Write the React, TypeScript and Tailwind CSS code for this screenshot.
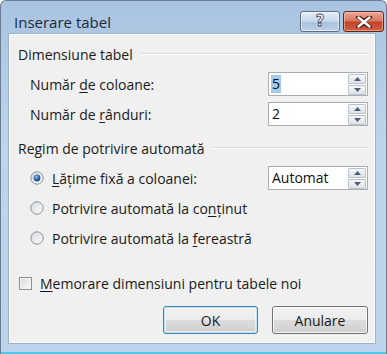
import React from "react";

function Spin({ value, selected }: { value: string; selected?: boolean }) {
  return (
    <div className="w-[100px] h-[24px] border border-[#abadb3] bg-white flex items-center justify-between pl-[2px] pr-[1px]">
      <span className={selected ? "bg-[#a3c9ef] text-[#111] px-[1px] leading-[18px]" : "text-[#111] px-[1px] leading-[18px]"}>{value}</span>
      <div className="flex flex-col gap-[1px] w-[18px]">
        <div className="h-[10px] border border-[#bcc3cc] rounded-[1px] bg-[linear-gradient(#f6f6f6,#dfe2e6)] flex items-center justify-center">
          <svg width="7" height="4" viewBox="0 0 7 4"><path d="M0 4 L3.5 0 L7 4 Z" fill="#4a5e80" /></svg>
        </div>
        <div className="h-[10px] border border-[#bcc3cc] rounded-[1px] bg-[linear-gradient(#f6f6f6,#dfe2e6)] flex items-center justify-center">
          <svg width="7" height="4" viewBox="0 0 7 4"><path d="M0 0 L3.5 4 L7 0 Z" fill="#4a5e80" /></svg>
        </div>
      </div>
    </div>
  );
}

function Radio({ checked }: { checked?: boolean }) {
  return (
    <svg width="14" height="14" viewBox="0 0 14 14" className="shrink-0">
      <defs>
        <linearGradient id="rg" x1="0" y1="0" x2="1" y2="1">
          <stop offset="0" stopColor="#d8dadd" />
          <stop offset="1" stopColor="#fbfbfb" />
        </linearGradient>
        <radialGradient id="rd" cx="0.4" cy="0.35" r="0.7">
          <stop offset="0" stopColor="#8fc0ee" />
          <stop offset="0.55" stopColor="#2f6cb5" />
          <stop offset="1" stopColor="#173f77" />
        </radialGradient>
      </defs>
      <circle cx="7" cy="7" r="6.2" fill="url(#rg)" stroke="#8c9096" strokeWidth="1" />
      {checked && <circle cx="7" cy="7" r="3.4" fill="url(#rd)" />}
    </svg>
  );
}

function Header({ text, lineStart }: { text: string; lineStart?: string }) {
  return (
    <div className="h-[20px] flex items-center pl-[8px] pr-[6px]">
      <span className="text-[#1a1a1a]">{text}</span>
      <div className="flex-1 ml-[8px] h-[2px] border-t border-[#d5dde5] border-b border-b-white" />
    </div>
  );
}

export default function App() {
  return (
    <div className="w-[387px] h-[354px] flex flex-col rounded-t-[6px] border border-[#6a7c91] border-b-0 bg-[linear-gradient(#a9c4e1,#bdd4eb_40%,#bcd3eb)] font-['Open_Sans','Noto_Sans',sans-serif] text-[14px] text-[#1a1a1a] overflow-hidden">
      <div className="h-[33px] shrink-0 flex items-start pl-[13px] pr-[2px]">
        <span className="mt-[10px] text-[15px] leading-[22px] text-[#1b2a3c]">Inserare tabel</span>
        <div className="flex-1" />
        <div className="mt-[10px] w-[40px] h-[21px] rounded-[3px] border border-[#5c6e86] bg-[linear-gradient(#e4edf7,#c6d7ea_50%,#a9c1dd_51%,#bcd0e8)] shadow-[inset_0_0_0_1px_rgba(255,255,255,0.6)] flex items-center justify-center">
          <span className="font-['DejaVu_Sans',sans-serif] font-bold text-[15px] leading-none text-[#f4f7fb] [-webkit-text-stroke:0.8px_#3a4d66]">?</span>
        </div>
        <div className="mt-[10px] ml-[3px] w-[41px] h-[21px] rounded-[3px] border border-[#5a2a22] bg-[linear-gradient(#eba897,#d9775f_45%,#c2432a_55%,#d2603f)] shadow-[inset_0_0_0_1px_rgba(255,210,200,0.5)] flex items-center justify-center">
          <svg width="16" height="12" viewBox="0 0 16 12">
            <path d="M2 1 L8 5 L14 1 M2 11 L8 7 L14 11 M8 5 L8 7" stroke="#4a1c14" strokeWidth="4.2" strokeLinecap="round" fill="none" />
            <path d="M2.5 1.5 L13.5 10.5 M13.5 1.5 L2.5 10.5" stroke="#ffffff" strokeWidth="2.4" strokeLinecap="round" fill="none" />
          </svg>
        </div>
      </div>
      <div className="flex-1 flex flex-col ml-[8px] mr-[11px] mb-[9px] bg-[#f0f0f0] border border-[#f8fbfe] shadow-[0_0_0_1px_#9db4cf]">
        <div className="mt-[9px]">
          <Header text="Dimensiune tabel" />
        </div>
        <div className="mt-[8px] flex items-center justify-between pl-[20px] pr-[6px]">
          <span>Număr <u className="underline-offset-2">d</u>e coloane:</span>
          <Spin value="5" selected />
        </div>
        <div className="mt-[6px] flex items-center justify-between pl-[20px] pr-[6px]">
          <span>Număr de <u className="underline-offset-2">r</u>ânduri:</span>
          <Spin value="2" />
        </div>
        <div className="mt-[12px]">
          <Header text="Regim de potrivire automată" />
        </div>
        <div className="mt-[8px] h-[24px] flex items-center justify-between pl-[20px] pr-[6px]">
          <div className="flex items-center gap-[8px]">
            <Radio checked />
            <span><u className="underline-offset-2">L</u>ățime fixă a coloanei:</span>
          </div>
          <Spin value="Automat" />
        </div>
        <div className="mt-[6px] h-[24px] flex items-center pl-[20px] gap-[8px]">
          <Radio />
          <span>Potrivire automată la co<u className="underline-offset-2">n</u>ținut</span>
        </div>
        <div className="mt-[6px] h-[24px] flex items-center pl-[20px] gap-[8px]">
          <Radio />
          <span>Potrivire automată la <u className="underline-offset-2">f</u>ereastră</span>
        </div>
        <div className="mt-[23px] h-[20px] flex items-center pl-[9px] gap-[8px]">
          <div className="w-[13px] h-[13px] border border-[#8e8f8f] bg-[linear-gradient(135deg,#d9dadc,#fafafa)] shadow-[inset_0_0_0_1px_#f4f4f4]" />
          <span><u className="underline-offset-2">M</u>emorare dimensiuni pentru tabele noi</span>
        </div>
        <div className="mt-[13px] flex justify-end gap-[14px] pr-[6px]">
          <div className="w-[95px] h-[28px] rounded-[3px] border border-[#3c7fb1] bg-[linear-gradient(#f2f2f2,#ebebeb_50%,#dddddd_50%,#cfcfcf)] shadow-[inset_0_0_0_1px_#bfe6f8,inset_0_0_0_2px_rgba(255,255,255,0.5)] flex items-center justify-center">
            OK
          </div>
          <div className="w-[96px] h-[28px] rounded-[3px] border border-[#707070] bg-[linear-gradient(#f2f2f2,#ebebeb_50%,#dddddd_50%,#cfcfcf)] shadow-[inset_0_0_0_1px_rgba(255,255,255,0.8)] flex items-center justify-center">
            Anulare
          </div>
        </div>
      </div>
      <div className="h-[2px] shrink-0 bg-[#45cbef]" />
    </div>
  );
}
